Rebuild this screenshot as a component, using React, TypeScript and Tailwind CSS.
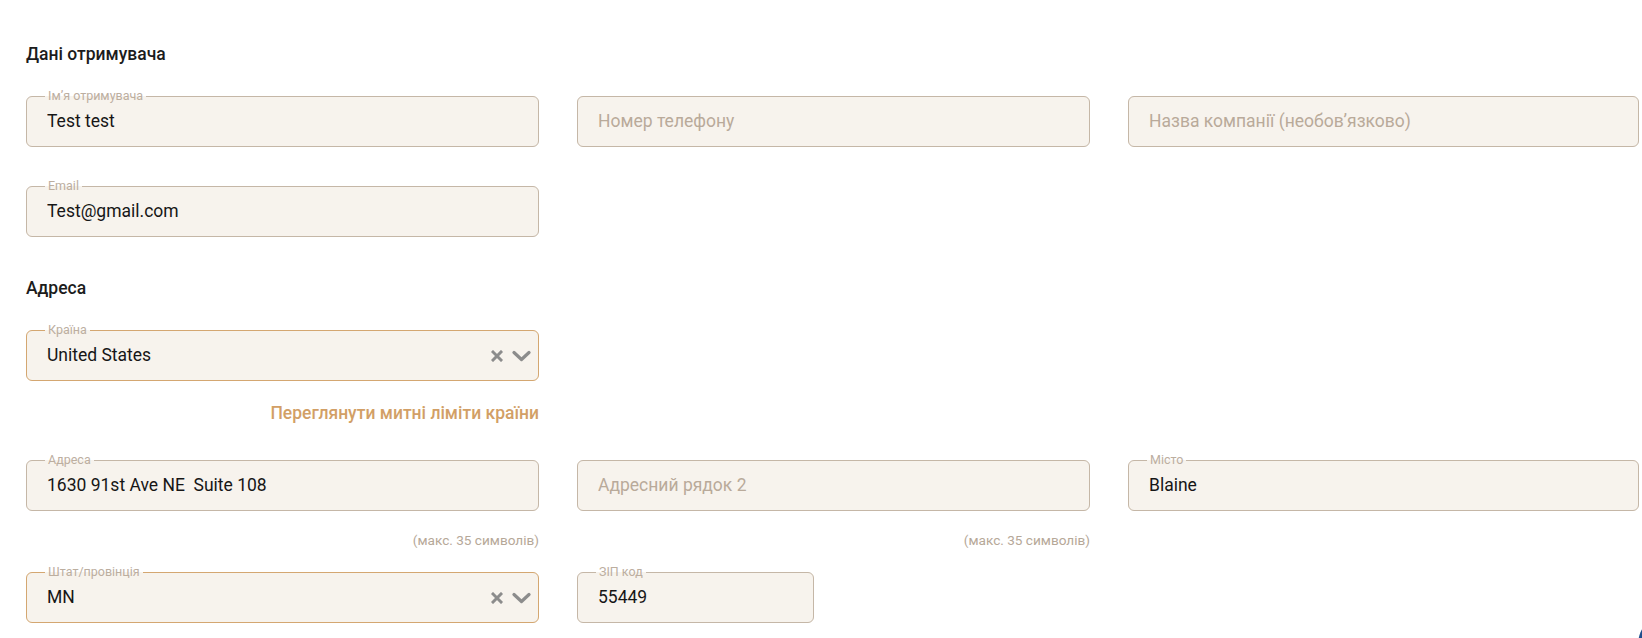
import clsx from 'clsx';

type FieldProps = {
  label?: string;
  value?: string;
  placeholder?: string;
  select?: boolean;
  className?: string;
};

function ClearIcon() {
  return (
    <svg width="12" height="12" viewBox="0 0 12 12" className="shrink-0">
      <path d="M2 2 L10 10 M10 2 L2 10" stroke="#8c8c8c" strokeWidth="3" strokeLinecap="square" />
    </svg>
  );
}

function ChevronIcon() {
  return (
    <svg width="19" height="12" viewBox="0 0 19 12" className="shrink-0">
      <path d="M2 2.5 L9.5 9.5 L17 2.5" stroke="#8c8c8c" strokeWidth="3.2" fill="none" strokeLinecap="round" strokeLinejoin="round" />
    </svg>
  );
}

/** Outlined field with a notched label, like the checkout form inputs. */
function Field({ label, value, placeholder, select, className }: FieldProps) {
  return (
    <div className={clsx('relative h-[51px] rounded-[6px] bg-[#f7f3ed]', className)}>
      <fieldset
        className={clsx(
          'pointer-events-none absolute inset-x-0 bottom-0 rounded-[6px] border px-[18px]',
          label ? 'top-[-7px]' : 'top-0',
          select ? 'border-[#d4a771]' : 'border-[#c5b7a7]',
        )}
      >
        {label && (
          <legend className="px-[3px] text-[12.5px] leading-[14px] text-[#bcae9f]">{label}</legend>
        )}
      </fieldset>
      <div className="flex h-full items-center pl-[21px] pr-[8px] text-[17.5px]">
        <span
          className={clsx('flex-1 truncate whitespace-pre', value ? 'text-[#161616]' : 'text-[#b9aa9a]')}
        >
          {value ?? placeholder}
        </span>
        {select && (
          <div className="flex items-center gap-[9px]">
            <ClearIcon />
            <ChevronIcon />
          </div>
        )}
      </div>
    </div>
  );
}

function Hint({ children }: { children: string }) {
  return <p className="mt-[20px] text-right text-[13.6px] leading-[18px] text-[#b6a898]">{children}</p>;
}

export default function App() {
  return (
    <div className="relative min-h-screen overflow-hidden bg-white pl-[26px] pr-[2px] pt-[43px] font-['Roboto',sans-serif]">
      <h2 className="text-[17.5px] font-medium leading-[22px] text-[#1c1c1c]">Дані отримувача</h2>

      <div className="mt-[31px] grid grid-cols-[513px_513px_511px] gap-x-[38px] gap-y-[39px]">
        <Field label="Ім’я отримувача" value="Test test" />
        <Field placeholder="Номер телефону" />
        <Field placeholder="Назва компанії (необов’язково)" />
        <Field label="Email" value="Test@gmail.com" />
      </div>

      <h2 className="mt-[40px] text-[17.5px] font-medium leading-[22px] text-[#1c1c1c]">Адреса</h2>

      <div className="mt-[31px] w-[513px]">
        <Field label="Країна" value="United States" select />
        <p className="mt-[21px] text-right text-[17.5px] font-medium leading-[22px] text-[#d29f66]">
          Переглянути митні ліміти країни
        </p>
      </div>

      <div className="mt-[36px] grid grid-cols-[513px_513px_511px] items-start gap-x-[38px]">
        <div>
          <Field label="Адреса" value="1630 91st Ave NE  Suite 108" />
          <Hint>(макс. 35 символів)</Hint>
        </div>
        <div>
          <Field placeholder="Адресний рядок 2" />
          <Hint>(макс. 35 символів)</Hint>
        </div>
        <Field label="Місто" value="Blaine" />
      </div>

      <div className="mt-[23px] grid grid-cols-[513px_513px_511px] gap-x-[38px]">
        <Field label="Штат/провінція" value="MN" select />
        <Field label="ЗІП код" value="55449" className="w-[237px]" />
      </div>

      <div className="absolute bottom-[-40px] right-[-62px] h-[66px] w-[66px] rounded-full bg-[#1f4e8c]" />
    </div>
  );
}
